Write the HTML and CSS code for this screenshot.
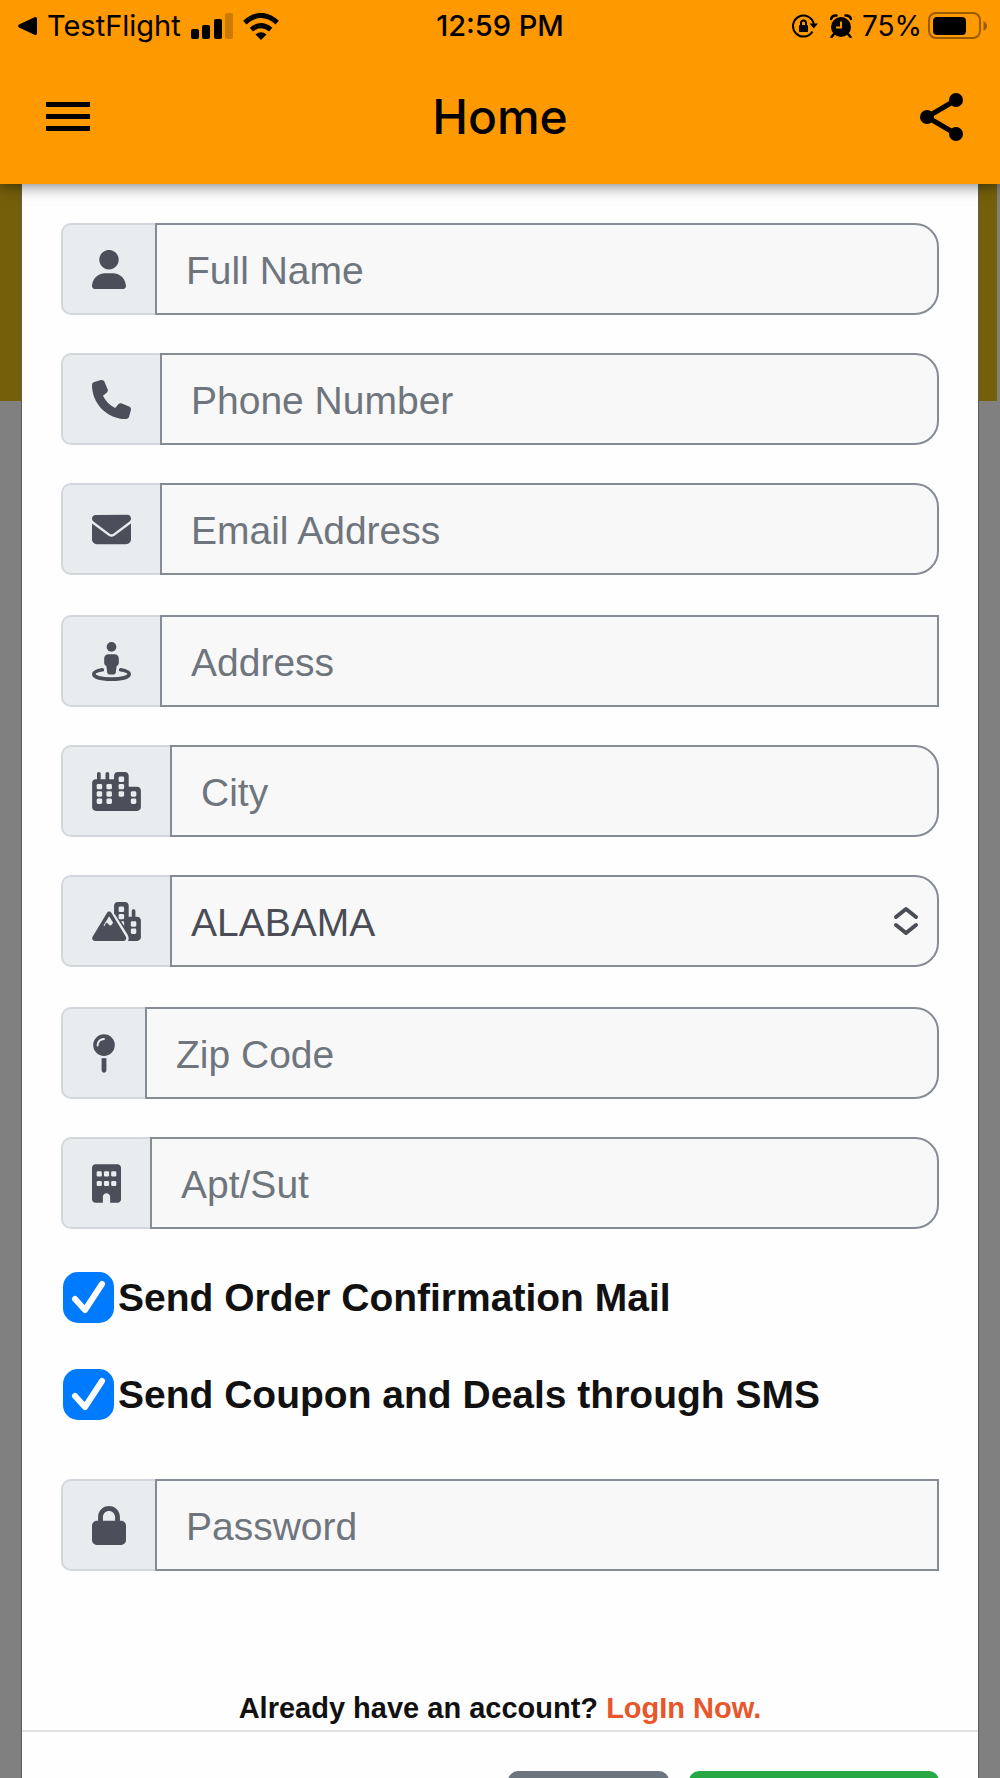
FILE: index.html
```html
<!DOCTYPE html>
<html lang="en">
<head>
<meta charset="utf-8">
<meta name="viewport" content="width=device-width, initial-scale=1">
<title>Home</title>
<link rel="stylesheet" href="styles.css">
</head>
<body>
<header class="app-header">
  <div class="status-bar">
    <div class="status-left">
      <svg class="back-arrow" width="19" height="18" viewBox="0 0 19 18" aria-hidden="true"><path d="M1 7.600 16.500 .3Q19-.5 19 2V16Q19 18.500 16.500 17.700L1 10.400Q-.7 9 1 7.600z"/></svg>
      <span class="carrier">TestFlight</span>
      <svg class="signal" width="42" height="27" viewBox="0 0 42 27" aria-hidden="true"><rect x="0" y="16" width="8" height="10" rx="2"/><rect x="11" y="12" width="8" height="14" rx="2"/><rect x="23" y="6" width="8" height="20" rx="2"/><rect x="34" y="0" width="8" height="26" rx="2" opacity=".2"/></svg>
      <svg width="36" height="27" viewBox="0 0 36 27" aria-hidden="true"><path d="M18 27 12.500 21.500Q18 17 23.500 21.500z"/><path d="M8.300 16.600Q18 8.600 27.700 16.600M1.800 9.600Q18-4.600 34.200 9.600" fill="none" stroke="#000" stroke-width="5"/></svg>
    </div>
    <span class="clock">12:59 PM</span>
    <div class="status-right">
      <svg width="26" height="24" viewBox="0 0 26 24" aria-hidden="true"><path d="M20.500 17.500A10.500 10.500 0 1 1 21.800 10" fill="none" stroke="#000" stroke-width="2"/><path d="M17.500 9.500H26L21.800 14.500z"/><rect x="7" y="11" width="9" height="7" rx="1"/><path d="M9 12V9Q9 6.500 11.500 6.500T14 9V12" fill="none" stroke="#000" stroke-width="2"/></svg>
      <svg width="22" height="24" viewBox="0 0 22 24" aria-hidden="true"><circle cx="11" cy="13" r="10"/><path d="M11 7.500V13.500H6" fill="none" stroke="#ff9900" stroke-width="2"/><path d="M1 5Q2 1 6.500 1.500M21 5Q20 1 15.500 1.500M4 20 1.500 23M18 20 20.500 23" fill="none" stroke="#000" stroke-width="2.500" stroke-linecap="round"/></svg>
      <span class="charge">75%</span>
      <svg width="59" height="28" viewBox="0 0 59 28" aria-hidden="true"><rect x="1" y="1" width="51" height="25" rx="7" fill="none" stroke="#000" stroke-width="2" opacity=".4"/><rect x="5" y="5" width="33" height="18" rx="4"/><path d="M55.500 9Q59 11 59 14T55.500 19z" opacity=".4"/></svg>
    </div>
  </div>
  <div class="toolbar">
    <button class="icon-button icon-button-start" type="button" aria-label="Menu">
      <svg width="44" height="30" viewBox="0 0 44 30"><path d="M0 0H44V5H0zM0 12H44V17H0zM0 24H44V29H0z"/></svg>
    </button>
    <h1 class="title">Home</h1>
    <button class="icon-button icon-button-end" type="button" aria-label="Share">
      <svg width="44" height="48" viewBox="0 0 44 48"><path d="M36 7 7 24 36 41" fill="none" stroke="#000" stroke-width="5"/><circle cx="36" cy="7" r="7"/><circle cx="7" cy="24" r="7"/><circle cx="36" cy="41" r="7"/></svg>
    </button>
  </div>
</header>

<main class="backdrop">
  <form class="modal">
    <div class="modal-body">
      <div class="field-group">
        <div class="field">
          <label class="addon" for="name" aria-label="Full Name"><svg width="34" height="39" viewBox="0 0 448 512"><path d="M224 256c70.700 0 128-57.310 128-128s-57.300-128-128-128C153.300 0 96 57.310 96 128S153.300 256 224 256zM274.700 304H173.300C77.610 304 0 381.600 0 477.300c0 19.140 15.520 34.670 34.660 34.670h378.700C432.500 512 448 496.500 448 477.300C448 381.600 370.400 304 274.700 304z"/></svg></label>
          <input class="control rounded" id="name" type="text" placeholder="Full Name">
        </div>
        <div class="field">
          <label class="addon" for="phone" aria-label="Phone Number"><svg width="39" height="39" viewBox="0 0 512 512"><path d="M164.900 24.600c-7.700-18.600-28-28.500-47.400-23.200l-88 24C12.100 30.200 0 46 0 64C0 311.400 200.600 512 448 512c18 0 33.800-12.100 38.600-29.500l24-88c5.300-19.400-4.600-39.700-23.200-47.400l-96-40c-16.300-6.800-35.200-2.100-46.300 11.600L304.700 368C234.300 334.700 177.300 277.700 144 207.300L193.300 167c13.700-11.200 18.400-30 11.600-46.300l-40-96z"/></svg></label>
          <input class="control rounded" id="phone" type="tel" placeholder="Phone Number">
        </div>
        <div class="field">
          <label class="addon" for="email" aria-label="Email Address"><svg width="39" height="39" viewBox="0 0 512 512"><path d="M48 64C21.500 64 0 85.500 0 112c0 15.100 7.100 29.300 19.200 38.400L236.800 313.600c11.400 8.500 27 8.500 38.400 0L492.800 150.400c12.100-9.100 19.200-23.300 19.200-38.400c0-26.500-21.500-48-48-48L48 64zM0 176L0 384c0 35.300 28.700 64 64 64l384 0c35.300 0 64-28.700 64-64l0-208L294.400 339.200c-22.800 17.100-54 17.100-76.800 0L0 176z"/></svg></label>
          <input class="control rounded" id="email" type="email" placeholder="Email Address">
        </div>
      </div>

      <div class="field-group">
        <div class="field">
          <label class="addon" for="address" aria-label="Address"><svg width="39" height="39" viewBox="0 0 512 512"><circle cx="256" cy="64" r="64"/><path d="M216 160H296C330 160 352 184 352 216V272C352 292 341 307 324 315L312 402C310 418 300 428 284 428H228C212 428 202 418 200 402L188 315C171 307 160 292 160 272V216C160 184 182 160 216 160z"/><path d="M136 364C66 376 24 394 24 420C24 464 124 488 256 488S488 464 488 420C488 394 446 376 376 364" fill="none" stroke="currentColor" stroke-width="48" stroke-linecap="round"/></svg></label>
          <input class="control" id="address" type="text" placeholder="Address">
        </div>
        <div class="field">
          <label class="addon" for="city" aria-label="City"><svg width="49" height="39" viewBox="0 0 640 512"><path d="M480 192H592C618.500 192 640 213.500 640 240V464C640 490.500 618.500 512 592 512H48C21.490 512 0 490.500 0 464V144C0 117.500 21.490 96 48 96H64V24C64 10.750 74.750 0 88 0C101.300 0 112 10.750 112 24V96H176V24C176 10.750 186.700 0 200 0C213.300 0 224 10.750 224 24V96H288V48C288 21.490 309.500 0 336 0H432C458.500 0 480 21.490 480 48V192z"/><g class="window"><rect x="60" y="156" width="72" height="72" rx="18"/><rect x="60" y="252" width="72" height="72" rx="18"/><rect x="60" y="348" width="72" height="72" rx="18"/><rect x="188" y="156" width="72" height="72" rx="18"/><rect x="188" y="252" width="72" height="72" rx="18"/><rect x="188" y="348" width="72" height="72" rx="18"/><rect x="348" y="60" width="72" height="72" rx="18"/><rect x="348" y="156" width="72" height="72" rx="18"/><rect x="348" y="252" width="72" height="72" rx="18"/><rect x="508" y="252" width="72" height="72" rx="18"/><rect x="508" y="348" width="72" height="72" rx="18"/></g></svg></label>
          <input class="control rounded" id="city" type="text" placeholder="City">
        </div>
        <div class="field">
          <label class="addon" for="state" aria-label="State"><svg width="49" height="39" viewBox="0 0 640 512"><path d="M288 160V48C288 21 309 0 336 0H432C459 0 480 21 480 48V192H520V120C520 88 568 88 568 120V192H592C619 192 640 213 640 240V464C640 491 619 512 592 512H472C484 488 482 460 466 430L298 160z"/><g class="window"><rect x="348" y="60" width="72" height="72" rx="18"/><rect x="348" y="156" width="72" height="72" rx="18"/><path d="M380 252H408Q420 252 420 264V316z"/><rect x="508" y="252" width="72" height="72" rx="18"/><rect x="508" y="348" width="72" height="72" rx="18"/></g><path class="mountain" d="M252 141 441 453C457 480 442 512 410 512H40C6 512-10 480 8 453L196 141C208 120 240 120 252 141z"/><path class="window" d="M224 186 276 272 250 304Q240 316 228 304L200 276Q188 264 178 282L160 318 150 304z"/></svg></label>
          <span class="select-wrap rounded">
            <select class="control select rounded" id="state"><option>ALABAMA</option></select>
            <svg class="chevrons" width="26" height="30" viewBox="0 0 26 30" aria-hidden="true"><path d="M3 11 13 3 23 11M3 19 13 27 23 19" fill="none" stroke="currentColor" stroke-width="4" stroke-linecap="round" stroke-linejoin="round"/></svg>
          </span>
        </div>
      </div>

      <div class="field-group">
        <div class="field">
          <label class="addon" for="zip" aria-label="Zip Code"><svg width="24" height="39" viewBox="0 0 320 512"><circle cx="160" cy="144" r="144"/><path d="M128 317Q160 323 192 317V480C192 522 128 522 128 480z"/><path class="shine" d="M74 148C74 98 112 62 160 62"/></svg></label>
          <input class="control rounded" id="zip" type="text" placeholder="Zip Code">
        </div>
        <div class="field">
          <label class="addon" for="apt" aria-label="Apt/Sut"><svg width="29" height="39" viewBox="0 0 384 512"><path d="M48 0H336C363 0 384 21 384 48V464C384 491 363 512 336 512H240V432C240 368 144 368 144 432V512H48C21 512 0 491 0 464V48C0 21 21 0 48 0z"/><g class="window"><rect x="62" y="94" width="68" height="68" rx="16"/><rect x="158" y="94" width="68" height="68" rx="16"/><rect x="254" y="94" width="68" height="68" rx="16"/><rect x="62" y="222" width="68" height="68" rx="16"/><rect x="158" y="222" width="68" height="68" rx="16"/><rect x="254" y="222" width="68" height="68" rx="16"/></g></svg></label>
          <input class="control rounded" id="apt" type="text" placeholder="Apt/Sut">
        </div>
      </div>

      <div class="checks">
        <label class="check"><input class="check-box" type="checkbox" checked><span>Send Order Confirmation Mail</span></label>
        <label class="check"><input class="check-box" type="checkbox" checked><span>Send Coupon and Deals through SMS</span></label>
      </div>

      <div class="field">
        <label class="addon" for="password" aria-label="Password"><svg width="34" height="39" viewBox="0 0 448 512"><path d="M80 192V144C80 64.470 144.500 0 224 0C303.500 0 368 64.470 368 144V192H384C419.300 192 448 220.700 448 256V448C448 483.300 419.300 512 384 512H64C28.650 512 0 483.300 0 448V256C0 220.700 28.650 192 64 192H80zM144 192H304V144C304 99.820 268.200 64 224 64C179.800 64 144 99.820 144 144V192z"/></svg></label>
        <input class="control" id="password" type="password" placeholder="Password">
      </div>

      <p class="login">Already have an account? <a class="login-link" href="#login">LogIn Now.</a></p>
    </div>
    <div class="modal-footer">
      <button class="btn btn-secondary" type="button" aria-label="Close"></button>
      <button class="btn btn-success" type="submit" aria-label="Create account"></button>
    </div>
  </form>
</main>
</body>
</html>
```
FILE: styles.css
```css
*,
*::before,
*::after {
  box-sizing: border-box;
}

body {
  margin: 0;
  height: 100vh;
  display: flex;
  flex-direction: column;
  overflow: hidden;
  background: #808080;
  color: #111;
  font-family: "Liberation Sans", Arial, sans-serif;
}

svg {
  display: block;
  flex: none;
}

/* Header */
.app-header {
  flex: none;
  position: relative;
  z-index: 1;
  background: #ff9900;
  color: #000;
  font-family: Inter, sans-serif;
  box-shadow: 0 2px 14px rgba(0, 0, 0, 0.5);
}

.status-bar {
  display: grid;
  grid-template-columns: 1fr auto 1fr;
  align-items: center;
  height: 50px;
  padding: 2px 13px 0;
  font-size: 29px;
  line-height: 32px;
}

.status-left,
.status-right {
  display: flex;
  align-items: center;
  gap: 10px;
}

.status-left {
  padding-left: 5px;
}

.status-right {
  justify-content: flex-end;
  gap: 12px;
}

.charge {
  margin: 0 -6px 0 -2px;
  font-size: 28px;
}

.clock {
  font-weight: 500;
}

.toolbar {
  display: grid;
  grid-template-columns: 1fr auto 1fr;
  align-items: center;
  height: 134px;
  padding: 0 36px;
}

.title {
  margin: 0;
  font-size: 48px;
  line-height: 56px;
  font-weight: 500;
}

.icon-button {
  padding: 0;
  border: 0;
  background: none;
  color: inherit;
}

.icon-button-start {
  justify-self: start;
  padding-left: 10px;
}

.icon-button-end {
  justify-self: end;
}

/* Modal over the dimmed page */
.backdrop {
  flex: 1;
  min-height: 0;
  overflow-y: auto;
  scrollbar-width: none;
  padding: 0 22px;
  background: linear-gradient(#745f0a, #745f0a) no-repeat 0 0 / calc(100% - 3px) 217px;
}

.modal {
  background: #fefefe;
  box-shadow: 0 0 0 1px #5e5e5e;
}

.modal-body {
  padding: 39px 39px 0;
}

.field-group {
  display: flex;
  flex-direction: column;
  gap: 38px;
  margin-bottom: 40px;
}

.field {
  display: flex;
  height: 92px;
}

.addon {
  flex: none;
  display: flex;
  align-items: center;
  padding: 0 29px;
  border: 2px solid #d3d7dd;
  border-right: 0;
  border-radius: 10px 0 0 10px;
  background: #e9ecef;
}

.addon svg {
  fill: #4a4f5a;
  color: #4a4f5a;
}

.addon .window {
  fill: #e9ecef;
}

.addon .mountain {
  stroke: #e9ecef;
  stroke-width: 32;
  paint-order: stroke;
}

.addon .shine {
  fill: none;
  stroke: #e9ecef;
  stroke-width: 26;
  stroke-linecap: round;
}

.control {
  flex: 1;
  min-width: 0;
  width: 100%;
  height: 100%;
  margin: 0;
  padding: 3px 29px 0;
  border: 2px solid #868c94;
  border-radius: 0;
  background: #f8f8f9;
  color: #495057;
  font-family: inherit;
  font-size: 39px;
}

.control::placeholder {
  color: #6f757d;
  opacity: 1;
}

.rounded {
  border-radius: 0 24px 24px 0;
}

.select-wrap {
  flex: 1;
  display: grid;
  align-items: center;
}

.select-wrap > * {
  grid-area: 1 / 1;
}

.select {
  appearance: none;
  padding: 3px 19px 0;
  color: #4a4d55;
}

.chevrons {
  justify-self: end;
  margin-right: 20px;
  color: #4a4d55;
  pointer-events: none;
}

/* Tick boxes */
.checks {
  display: flex;
  flex-direction: column;
  gap: 46px;
  padding: 3px 2px 59px;
}

.check {
  display: flex;
  align-items: center;
  gap: 4px;
  font-size: 39px;
  line-height: 51px;
  font-weight: 700;
}

.check-box {
  appearance: none;
  flex: none;
  width: 51px;
  height: 51px;
  margin: 0;
  border-radius: 15px;
  background: #007aff;
}

.check-box:checked {
  background: #007aff url("data:image/svg+xml,%3Csvg xmlns='http://www.w3.org/2000/svg' viewBox='0 0 51 51'%3E%3Cpath d='M12 27 22 38 39 12' fill='none' stroke='white' stroke-width='6' stroke-linecap='round' stroke-linejoin='round'/%3E%3C/svg%3E") center / 51px 51px no-repeat;
}

.login {
  margin: 0;
  padding: 117px 0 2px;
  text-align: center;
  font-size: 29px;
  line-height: 40px;
  font-weight: 700;
}

.login-link {
  color: #e8562a;
  text-decoration: none;
}

.modal-footer {
  display: flex;
  justify-content: flex-end;
  gap: 20px;
  padding: 39px;
  border-top: 2px solid #dfe1e4;
}

.btn {
  height: 92px;
  width: 161px;
  padding: 0;
  border: 0;
  border-radius: 10px;
}

.btn-secondary {
  background: #6c757d;
}

.btn-success {
  width: 250px;
  background: #28a745;
}
```
